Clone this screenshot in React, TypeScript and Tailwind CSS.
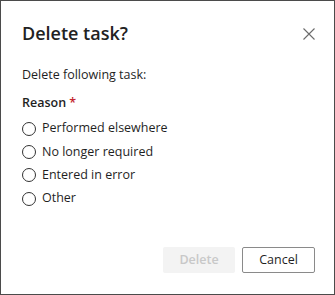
const reasons = ['Performed elsewhere', 'No longer required', 'Entered in error', 'Other']

export default function App() {
  return (
    <div
      className="w-[335px] h-[295px] bg-white border border-[#4b4b4b] flex flex-col text-[#1f1f1f]"
      style={{ fontFamily: '"Open Sans", "Noto Sans", sans-serif' }}
    >
      <div className="flex items-center justify-between pl-[21px] pr-[19px] pt-[19px]">
        <h1 className="text-[18px] font-semibold leading-[26px] text-[#222]">Delete task?</h1>
        <svg width="12" height="12" viewBox="0 0 12 12" className="mt-[2px]">
          <path d="M0.5 0.5 L11.5 11.5 M11.5 0.5 L0.5 11.5" stroke="#6b6b6b" strokeWidth="1.1" fill="none" />
        </svg>
      </div>

      <div className="pl-[21px] pt-[20px] text-[12.5px]">
        <p className="leading-[18px]">Delete following task:</p>
        <p className="mt-[10px] font-semibold leading-[18px]">
          Reason <span className="text-[#c4262e]">*</span>
        </p>
        <div className="mt-[5px] flex flex-col">
          {reasons.map((r) => (
            <label key={r} className="flex items-center gap-[6px] h-[23.4px]">
              <span className="w-[14px] h-[14px] rounded-full border border-[#333] bg-white" />
              <span>{r}</span>
            </label>
          ))}
        </div>
      </div>

      <div className="mt-auto flex justify-end gap-[7px] pr-[19px] pb-[21px]">
        <button className="w-[72px] h-[26px] bg-[#f3f3f3] text-[#c8c8c8] text-[12.5px] font-semibold rounded-[2px]">
          Delete
        </button>
        <button className="w-[73px] h-[26px] border border-[#8a8a8a] text-[#1f1f1f] text-[12.5px] font-medium rounded-[2px]">
          Cancel
        </button>
      </div>
    </div>
  )
}
